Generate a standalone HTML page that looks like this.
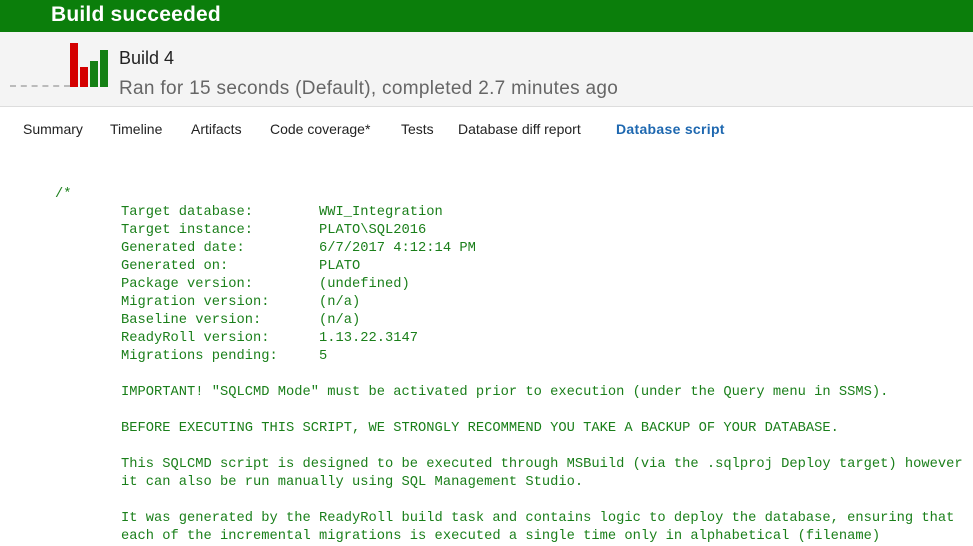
<!DOCTYPE html>
<html><head><style>
body{margin:0;width:973px;height:536px;overflow:hidden;background:#fff;font-family:"Liberation Sans",sans-serif;position:relative}
.top{position:absolute;left:0;top:0;width:973px;height:32px;background:#0b7e0b;}
.top span{position:absolute;left:51px;top:3px;color:#fff;font-weight:bold;font-size:21px;letter-spacing:0.2px}
.hdr{position:absolute;left:0;top:32px;width:973px;height:74px;background:#f4f4f4;border-bottom:1px solid #ddd}
.b{position:absolute}
.t1{position:absolute;left:119px;top:48px;font-size:18px;color:#222}
.t2{position:absolute;left:119px;top:78px;font-size:19px;color:#666;letter-spacing:0.32px}
.tabs{position:absolute;top:121px;font-size:14px;color:#222}
.tabs span{position:absolute;white-space:nowrap}
pre{position:absolute;left:55px;top:186px;margin:0;font-family:"Liberation Mono",monospace;font-size:13.75px;line-height:18px;color:#1a7f1a}
</style></head><body>
<div class="top"><span>Build succeeded</span></div>
<div class="hdr"></div>
<div class="b" style="left:10px;top:85px;width:60px;border-top:2px dashed #bbb"></div>
<div class="b" style="left:70px;top:43px;width:8px;height:44px;background:#d40000"></div>
<div class="b" style="left:80px;top:67px;width:8px;height:20px;background:#d40000"></div>
<div class="b" style="left:90px;top:61px;width:8px;height:26px;background:#148014"></div>
<div class="b" style="left:100px;top:50px;width:8px;height:37px;background:#148014"></div>
<div class="t1">Build 4</div>
<div class="t2">Ran for 15 seconds (Default), completed 2.7 minutes ago</div>
<div class="tabs">
<span style="left:23px">Summary</span>
<span style="left:110px">Timeline</span>
<span style="left:191px">Artifacts</span>
<span style="left:270px">Code coverage*</span>
<span style="left:401px">Tests</span>
<span style="left:458px">Database diff report</span>
<span style="left:616px;color:#1e68b0;font-weight:bold;letter-spacing:0.3px">Database script</span>
</div>
<pre>/*
        Target database:        WWI_Integration
        Target instance:        PLATO\SQL2016
        Generated date:         6/7/2017 4:12:14 PM
        Generated on:           PLATO
        Package version:        (undefined)
        Migration version:      (n/a)
        Baseline version:       (n/a)
        ReadyRoll version:      1.13.22.3147
        Migrations pending:     5

        IMPORTANT! "SQLCMD Mode" must be activated prior to execution (under the Query menu in SSMS).

        BEFORE EXECUTING THIS SCRIPT, WE STRONGLY RECOMMEND YOU TAKE A BACKUP OF YOUR DATABASE.

        This SQLCMD script is designed to be executed through MSBuild (via the .sqlproj Deploy target) however
        it can also be run manually using SQL Management Studio.

        It was generated by the ReadyRoll build task and contains logic to deploy the database, ensuring that
        each of the incremental migrations is executed a single time only in alphabetical (filename)</pre>
</body></html>
